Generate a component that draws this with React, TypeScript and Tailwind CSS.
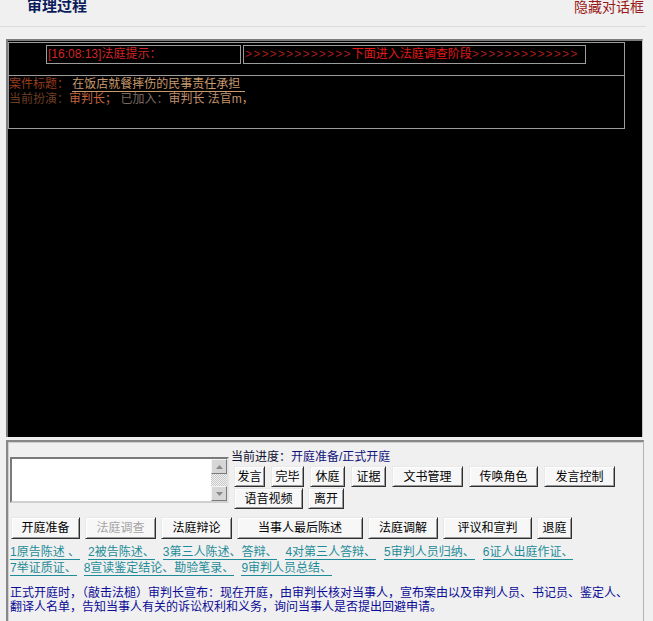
import React from "react";

const chevrons = ">>>>>>>>>>>>>";

function Btn({ label, w, disabled = false }: { label: string; w: string; disabled?: boolean }) {
  return (
    <button
      type="button"
      className={`${w} h-full shrink-0 bg-[#f7f7f7] border border-t-[#e8e8e8] border-l-[#e8e8e8] border-r-[#303030] border-b-[#303030] shadow-[inset_1px_1px_0_#ffffff,inset_-1px_-1px_0_#9a9a9a] text-[12px] leading-none ${
        disabled ? "text-[#a3a3a3]" : "text-black"
      }`}
    >
      {label}
    </button>
  );
}

function Arrow({ up }: { up?: boolean }) {
  return (
    <div className="w-full h-[15px] bg-[#d6d6d6] border border-t-[#f4f4f4] border-l-[#f4f4f4] border-r-[#7a7a7a] border-b-[#7a7a7a] flex items-center justify-center">
      <svg width="7" height="4" viewBox="0 0 7 4">
        {up ? <polygon points="3.5,0 7,4 0,4" fill="#8a8a8a" /> : <polygon points="0,0 7,0 3.5,4" fill="#8a8a8a" />}
      </svg>
    </div>
  );
}

const links1 = ["1原告陈述 、", "2被告陈述、", "3第三人陈述、答辩、", "4对第三人答辩、", "5审判人员归纳、", "6证人出庭作证、"];
const links2 = ["7举证质证、", "8宣读鉴定结论、勘验笔录、", "9审判人员总结、"];

export default function App() {
  return (
    <div className="w-[653px] h-[621px] overflow-hidden bg-[#f0f0f0] font-[family-name:'Liberation_Sans','Noto_Sans_CJK_SC',sans-serif]">
      {/* header */}
      <div className="w-[646px] h-[27px] border-b border-[#dadada] flex justify-between items-start">
        <div className="ml-[27px] -mt-[3px] text-[15px] leading-[18px] font-bold text-[#0b1b5b]">审理过程</div>
        <div className="mr-[2px] -mt-[1px] text-[14px] leading-[16px] text-[#9a1a1a]">隐藏对话框</div>
      </div>

      {/* console */}
      <div className="ml-[6px] mt-[12px] w-[637px] h-[398px] bg-black border-t-2 border-l-2 border-[#7c7c7c] border-r border-r-[#c4c4c4]">
        <div className="mt-[1px] w-[617px] h-[87px] border border-[#9c9c9c] text-[12px]">
          <div className="h-[33px] border-b border-[#9c9c9c] flex items-start pt-[2px] pl-[37px] gap-[2px]">
            <div className="w-[195px] h-[19px] border border-[#9c9c9c] pl-[1px] leading-[17px] text-[#d42424] whitespace-nowrap">
              [16:08:13]法庭提示：
            </div>
            <div className="w-[343px] h-[19px] border border-[#9c9c9c] pl-[1px] leading-[17px] whitespace-nowrap">
              <span className="text-[#a51c1c] tracking-[1.2px]">{chevrons}</span>
              <span className="text-[#e41818]">下面进入法庭调查阶段</span>
              <span className="text-[#a51c1c] tracking-[1.2px]">{chevrons}</span>
            </div>
          </div>
          <div className="pl-[0px] pt-[1px] leading-[15px] whitespace-nowrap">
            <div>
              <span className="text-[#983c1e]">案件标题：</span>{" "}
              <span className="inline-block leading-[13px] border-b border-[#c89a6c] text-[#c89a6c] pr-[5px]">
                在饭店就餐摔伤的民事责任承担
              </span>
            </div>
            <div>
              <span className="text-[#6e3e20]">当前扮演：</span>
              <span className="text-[#c2643e]">审判长；</span>{" "}
              <span className="text-[#7a6a62]">已加入：</span>
              <span className="text-[#c0906c]">审判长 法官m，</span>
            </div>
          </div>
        </div>
      </div>

      {/* control panel */}
      <div className="ml-[6px] mt-[3px] w-[638px] h-[200px] border-t-2 border-l-2 border-[#888888] border-r border-r-[#b4b4b4] shadow-[inset_1px_1px_0_#cfcfcf]">
        <div className="flex pt-[8px] pl-[2px]">
          <div className="mt-[7px] w-[219px] h-[46px] bg-white border-2 border-t-[#7a7a7a] border-l-[#7a7a7a] border-r-[#e4e4e4] border-b-[#d0d0d0] flex justify-end">
            <div className="w-[16px] h-full flex flex-col">
              <Arrow up />
              <div className="flex-1 bg-[repeating-conic-gradient(#c4c4c4_0_25%,#f4f4f4_0_50%)] bg-[length:2px_2px]" />
              <Arrow />
            </div>
          </div>
          <div className="ml-[2px] flex flex-col">
            <div className="text-[12px] leading-[14px] whitespace-nowrap">
              <span className="text-[#101030]">当前进度：</span>
              <span className="text-[#10107a]">开庭准备/正式开庭</span>
            </div>
            <div className="mt-[2px] ml-[3px] h-[21px] flex gap-[6px]">
              <Btn label="发言" w="w-[31px]" />
              <Btn label="完毕" w="w-[33px]" />
              <Btn label="休庭" w="w-[35px]" />
              <Btn label="证据" w="w-[35px]" />
              <Btn label="文书管理" w="w-[71px]" />
              <Btn label="传唤角色" w="w-[69px]" />
              <Btn label="发言控制" w="w-[71px]" />
            </div>
            <div className="mt-[1px] ml-[3px] h-[21px] flex gap-[5px]">
              <Btn label="语音视频" w="w-[69px]" />
              <Btn label="离开" w="w-[36px]" />
            </div>
          </div>
        </div>

        <div className="mt-[8px] ml-[3px] h-[22px] flex gap-[5px]">
          <Btn label="开庭准备" w="w-[69px]" />
          <Btn label="法庭调查" w="w-[71px]" disabled />
          <Btn label="法庭辩论" w="w-[71px]" />
          <Btn label="当事人最后陈述" w="w-[126px]" />
          <Btn label="法庭调解" w="w-[70px]" />
          <Btn label="评议和宣判" w="w-[89px]" />
          <Btn label="退庭" w="w-[35px]" />
        </div>

        <div className="mt-[7px] ml-[2px] flex flex-col gap-[2px] text-[12px] text-[#1e8c98]">
          <div className="flex gap-[8px] whitespace-nowrap">
            {links1.map((l) => (
              <span key={l} className="inline-block leading-[13px] border-b border-[#1e8c98]">
                {l}
              </span>
            ))}
          </div>
          <div className="flex gap-[7px] whitespace-nowrap">
            {links2.map((l) => (
              <span key={l} className="inline-block leading-[13px] border-b border-[#1e8c98]">
                {l}
              </span>
            ))}
          </div>
        </div>

        <p className="mt-[10px] ml-[2px] text-[12px] leading-[14px] text-[#0a0a96] whitespace-nowrap">
          正式开庭时，（敲击法槌）审判长宣布：现在开庭，由审判长核对当事人，宣布案由以及审判人员、书记员、鉴定人、
          <br />
          翻译人名单，告知当事人有关的诉讼权利和义务，询问当事人是否提出回避申请。
        </p>
      </div>
    </div>
  );
}
